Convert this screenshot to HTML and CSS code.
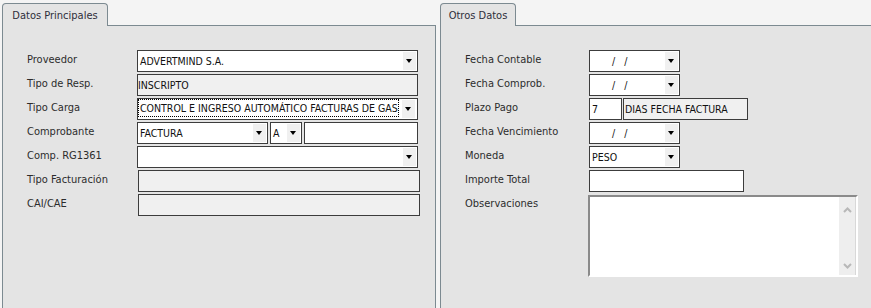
FILE: index.html
```html
<!DOCTYPE html>
<html lang="es">
<head><meta charset="UTF-8"/>
<title>Comprobante</title>
<link rel="stylesheet" href="styles.css">
</head><body>
<div class="tabs">
 <div class="panel left">
  <div class="strip"><div class="tab tab-main">Datos Principales</div><div class="fill"></div></div>
  <div class="body">
   <div class="form form-main">
    <label>Proveedor</label>
    <div class="combo w281"><span class="val">ADVERTMIND S.A.</span><span class="arrow"></span></div>
    <label>Tipo de Resp.</label>
    <div class="ro w281"><span class="val">INSCRIPTO</span></div>
    <label>Tipo Carga</label>
    <div class="combo w281"><span class="val focus">CONTROL E INGRESO AUTOMÁTICO FACTURAS DE GAS</span><span class="arrow"></span></div>
    <label>Comprobante</label>
    <div class="group">
     <div class="combo w131"><span class="val">FACTURA</span><span class="arrow"></span></div>
     <div class="combo w32"><span class="val">A</span><span class="arrow"></span></div>
     <div class="txt w114"></div>
    </div>
    <label>Comp. RG1361</label>
    <div class="combo w281"><span class="val"></span><span class="arrow"></span></div>
    <label>Tipo Facturación</label>
    <div class="ro w282 shift"></div>
    <label>CAI/CAE</label>
    <div class="ro w282 shift"></div>
   </div>
  </div>
 </div>
 <div class="panel right">
  <div class="strip"><div class="tab tab-other">Otros Datos</div><div class="fill"></div></div>
  <div class="body">
   <div class="form form-other">
    <label>Fecha Contable</label>
    <div class="combo w91"><span class="val date">/   /</span><span class="arrow"></span></div>
    <label>Fecha Comprob.</label>
    <div class="combo w91"><span class="val date">/   /</span><span class="arrow"></span></div>
    <label>Plazo Pago</label>
    <div class="group g1">
     <div class="txt w33"><span class="val">7</span></div>
     <div class="ro w125"><span class="val pad">DIAS FECHA FACTURA</span></div>
    </div>
    <label>Fecha Vencimiento</label>
    <div class="combo w91"><span class="val date">/   /</span><span class="arrow"></span></div>
    <label>Moneda</label>
    <div class="combo w91"><span class="val">PESO</span><span class="arrow"></span></div>
    <label>Importe Total</label>
    <div class="txt w155"></div>
    <label>Observaciones</label>
    <div class="memo">
     <div class="memo-text"></div>
     <div class="vscroll">
      <svg width="9" height="6" viewBox="0 0 9 6"><polyline points="1,5 4.5,1.5 8,5" fill="none" stroke="#b8b8b8" stroke-width="2"/></svg>
      <svg width="9" height="6" viewBox="0 0 9 6"><polyline points="1,1 4.5,4.5 8,1" fill="none" stroke="#b8b8b8" stroke-width="2"/></svg>
     </div>
    </div>
   </div>
  </div>
 </div>
</div>
</body></html>
```

FILE: styles.css
```css
html,body{margin:0;height:100%;overflow:hidden;}
body{background:#f4f4f4;font-family:"DejaVu Sans Condensed","DejaVu Sans",sans-serif;font-stretch:condensed;font-size:11px;color:#2a2a2a;}
.tabs{display:flex;gap:4px;height:100%;padding:3px 0 0 2px;box-sizing:border-box;}
.panel{display:flex;flex-direction:column;}
.panel.left{width:434px;}
.panel.right{flex:1;}
.strip{display:flex;height:23px;flex:none;}
.tab{box-sizing:border-box;height:23px;border:1px solid #7c8a91;border-bottom:none;border-radius:4px 4px 0 0;background:#e4e4e4;text-align:center;padding-top:5px;line-height:13px;color:#2e2e3a;white-space:nowrap;}
.tab-main{width:106px;}
.tab-other{width:76px;}
.fill{flex:1;border-bottom:1px solid #7c8a91;}
.body{flex:1;background:#e4e4e4;border-left:1px solid #7c8a91;border-right:1px solid #7c8a91;padding:24px 0 0 24px;}
.panel.right .body{border-right:none;}
.form{display:grid;row-gap:2px;grid-auto-rows:22px;}
.form-main{grid-template-columns:110px auto;}
.form-other{grid-template-columns:124px auto;grid-template-rows:repeat(6,22px) 84px;}
.form label{padding-top:3px;line-height:13px;color:#2c2c2c;white-space:nowrap;}
.combo,.ro,.txt{box-sizing:border-box;height:22px;border:1px solid #3c3c3c;display:flex;font-size:10.5px;color:#111;line-height:20px;}
.combo,.txt{background:#fff;}
.ro{background:#f0f0f0;}
.val{flex:1;padding-left:2px;white-space:nowrap;overflow:hidden;}
.ro .val{padding-left:0;}
.ro .val.pad{padding-left:1px;}
.val.focus{flex:none;width:259px;margin:1px 3px 1px 1px;line-height:16px;outline:1px dotted #000;outline-offset:0;padding:0 0 0 1px;box-sizing:border-box;height:16px;}
.val.date{padding-left:22px;white-space:pre;}
.arrow{flex:none;width:13px;margin:1px;background:#f0f0f0;position:relative;}
.arrow::after{content:"";position:absolute;left:3px;top:7px;border-left:3.5px solid transparent;border-right:3.5px solid transparent;border-top:4px solid #000;}
.group{display:flex;gap:2px;}
.group.g1{gap:1px;}
.w281{width:281px;}
.w282{width:282px;}
.w131{width:131px;}
.w32{width:32px;}
.w114{width:114px;}
.w91{width:91px;}
.w33{width:33px;}
.w125{width:125px;}
.w155{width:155px;}
.shift{margin-left:1px;}
.memo{box-sizing:border-box;width:270px;height:82px;margin:1px 0 0 -1px;border-top:2px solid #8a8a8a;border-left:2px solid #8a8a8a;border-right:2px solid #fff;border-bottom:2px solid #fff;background:#fff;display:flex;}
.memo-text{flex:1;}
.vscroll{width:16px;background:#eeeeee;display:flex;flex-direction:column;justify-content:space-between;align-items:center;padding:10px 0 6px;border-right:1px solid #d8d8d8;}
```
